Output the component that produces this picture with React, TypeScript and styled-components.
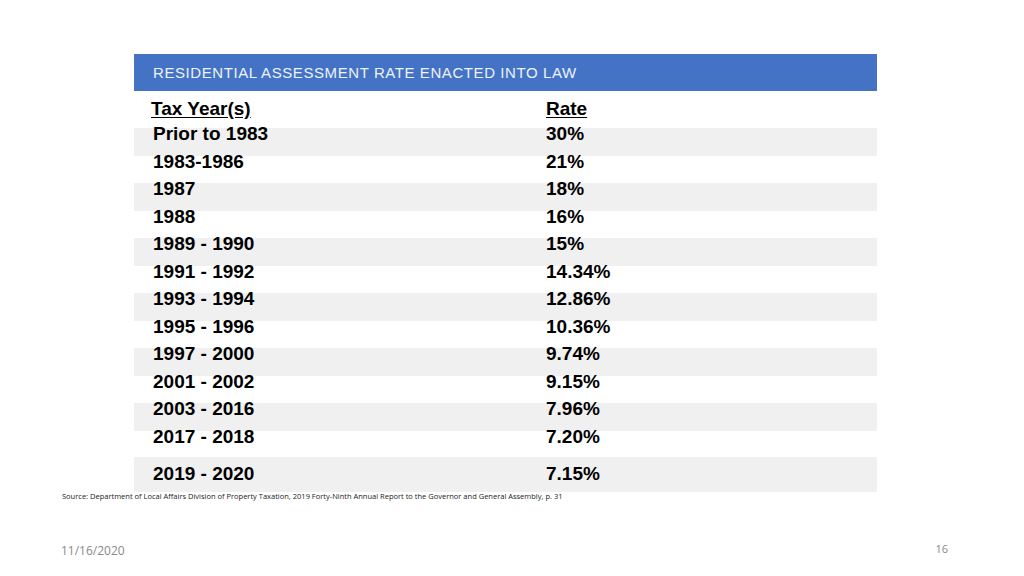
import React from "react";
import styled, { createGlobalStyle } from "styled-components";

const Global = createGlobalStyle`
  html, body { margin: 0; padding: 0; background: #ffffff; }
  body { width: 1024px; height: 576px; overflow: hidden; font-family: "Liberation Sans", Arial, sans-serif; }
`;

const Slide = styled.div`
  width: 1024px;
  height: 576px;
  box-sizing: border-box;
  padding-top: 54px;
  display: flex;
  flex-direction: column;
  background: #ffffff;
`;

const Table = styled.div`
  margin-left: 134px;
  width: 743px;
  display: flex;
  flex-direction: column;
`;

const TitleBar = styled.div`
  height: 37px;
  background: #4472c4;
  display: flex;
  align-items: center;
  padding-left: 19px;
  color: #eef2fb;
  font-family: "Liberation Sans", Arial, sans-serif;
  font-size: 15px;
  letter-spacing: 0.58px;
`;

const Row = styled.div<{ $shade?: boolean; $h: number; $pt: number }>`
  display: grid;
  grid-template-columns: 393px 1fr;
  height: ${(p) => p.$h}px;
  box-sizing: border-box;
  padding-top: ${(p) => p.$pt}px;
  padding-left: 19px;
  background: ${(p) => (p.$shade ? "#f0f0f0" : "transparent")};
  font-family: "Liberation Sans", Arial, sans-serif;
  font-weight: bold;
  font-size: 19px;
  line-height: 12px;
  color: #000;
`;

const HeadRow = styled.div`
  display: grid;
  grid-template-columns: 395px 1fr;
  height: 37px;
  box-sizing: border-box;
  padding-top: 12px;
  padding-left: 17px;
  font-family: "Liberation Sans", Arial, sans-serif;
  font-weight: bold;
  font-size: 19px;
  line-height: 12px;
  color: #000;
`;

const Underlined = styled.span`
  text-decoration: underline;
  text-underline-offset: 2px;
`;

const Source = styled.div`
  margin-top: -1px;
  padding-left: 62px;
  font-family: "Open Sans", "Liberation Sans", sans-serif;
  font-size: 7.5px;
  color: #222;
  white-space: nowrap;
`;

const Footer = styled.div`
  margin-top: auto;
  height: 38px;
  display: flex;
  justify-content: space-between;
  padding: 0 76px 0 61px;
  color: #8a8a8a;
  font-family: "Open Sans", "Liberation Sans", sans-serif;
`;

const DateText = styled.div`
  font-size: 12px;
  padding-top: 4px;
`;

const PageNum = styled.div`
  font-size: 11px;
  padding-top: 3px;
`;

const rows: [string, string][] = [
  ["Prior to 1983", "30%"],
  ["1983-1986", "21%"],
  ["1987", "18%"],
  ["1988", "16%"],
  ["1989 - 1990", "15%"],
  ["1991 - 1992", "14.34%"],
  ["1993 - 1994", "12.86%"],
  ["1995 - 1996", "10.36%"],
  ["1997 - 2000", "9.74%"],
  ["2001 - 2002", "9.15%"],
  ["2003 - 2016", "7.96%"],
  ["2017 - 2018", "7.20%"],
];

export default function App() {
  return (
    <>
      <Global />
      <Slide>
        <Table>
          <TitleBar>RESIDENTIAL ASSESSMENT RATE ENACTED INTO LAW</TitleBar>
          <HeadRow>
            <Underlined>Tax Year(s)</Underlined>
            <Underlined>Rate</Underlined>
          </HeadRow>
          {rows.map(([y, r], i) => (
            <Row key={y} $shade={i % 2 === 0} $h={i === rows.length - 1 ? 26 : 27.5} $pt={0}>
              <span>{y}</span>
              <span>{r}</span>
            </Row>
          ))}
          <Row $shade $h={35} $pt={11}>
            <span>2019 - 2020</span>
            <span>7.15%</span>
          </Row>
        </Table>
        <Source>
          Source: Department of Local Affairs Division of Property Taxation, 2019 Forty-Ninth Annual Report to the Governor and General Assembly, p. 31
        </Source>
        <Footer>
          <DateText>11/16/2020</DateText>
          <PageNum>16</PageNum>
        </Footer>
      </Slide>
    </>
  );
}
